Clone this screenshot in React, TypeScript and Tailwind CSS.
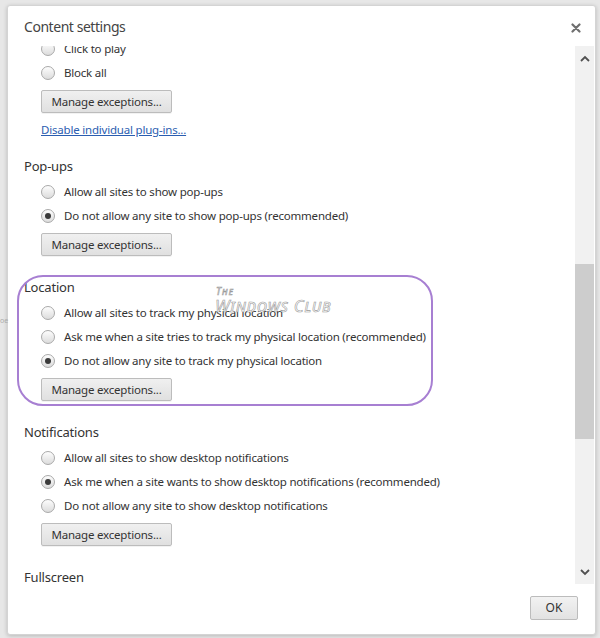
import React from "react";

const font = { fontFamily: '"Noto Sans", "Open Sans", Arial, sans-serif' };

function Radio({ checked, label }: { checked?: boolean; label: string }) {
  return (
    <div className="h-6 flex items-center pl-[33px]">
      <div className="w-[14px] h-[14px] rounded-full border border-[#a9a9a9] bg-gradient-to-b from-[#fdfdfd] to-[#dcdcdc] flex items-center justify-center shrink-0">
        {checked && <div className="w-[6px] h-[6px] rounded-full bg-[#3a3a3a]" />}
      </div>
      <span className="ml-[9px] text-[11.5px] tracking-[-0.2px] text-[#333] whitespace-nowrap">{label}</span>
    </div>
  );
}

function ManageBtn() {
  return (
    <div className="mt-[5px] pl-[33px]">
      <div className="w-[131px] h-[23px] border border-[#bcbcbc] rounded-[2px] bg-gradient-to-b from-[#f0f0f0] to-[#e0e0e0] flex items-center justify-center text-[11.5px] tracking-[-0.2px] text-[#333] shadow-[0_1px_0_rgba(0,0,0,0.05)]">
        Manage exceptions...
      </div>
    </div>
  );
}

function Heading({ children, mt }: { children: React.ReactNode; mt: string }) {
  return (
    <div className={`${mt} h-[18px] pl-[16px] text-[13px] tracking-[-0.2px] leading-[18px] text-[#333] mb-[5px]`}>
      {children}
    </div>
  );
}

export default function App() {
  return (
    <div className="relative w-[600px] h-[638px] bg-[#e7e7e7] pl-[7px] pt-[5px] overflow-hidden" style={font}>
      <div className="relative w-[589px] h-[630px] bg-white rounded-[3px] border border-[#d4d4d4] shadow-[0_1px_4px_rgba(0,0,0,0.2)] flex flex-col">
        {/* title */}
        <div className="h-[40px] flex items-center justify-between pl-[16px] pr-[14px] shrink-0">
          <span className="text-[14px] tracking-[-0.45px] text-[#444]">Content settings</span>
          <svg width="10" height="10" viewBox="0 0 10 10" className="mt-[4px]">
            <path d="M1.5 1.5 L8.5 8.5 M8.5 1.5 L1.5 8.5" stroke="#6f6f6f" strokeWidth="2.2" strokeLinecap="round" />
          </svg>
        </div>
        {/* content viewport */}
        <div className="relative h-[538px] flex shrink-0">
          <div className="relative flex-1 overflow-hidden">
            <div className="mt-[-9px] relative">
              <Radio label="Click to play" />
              <Radio label="Block all" />
              <ManageBtn />
              <div className="mt-[9px] h-4 pl-[33px] text-[11.5px] tracking-[-0.2px] leading-4 text-[#2a5db0] underline">
                Disable individual plug-ins...
              </div>
              <Heading mt="mt-[19px]">Pop-ups</Heading>
              <Radio label="Allow all sites to show pop-ups" />
              <Radio checked label="Do not allow any site to show pop-ups (recommended)" />
              <ManageBtn />
              <div className="relative">
                <Heading mt="mt-[22px]">Location</Heading>
                <Radio label="Allow all sites to track my physical location" />
                <Radio label="Ask me when a site tries to track my physical location (recommended)" />
                <Radio checked label="Do not allow any site to track my physical location" />
                <ManageBtn />
                {/* watermark */}
                <div className="absolute left-[207px] top-[8px] text-white [-webkit-text-stroke:0.6px_#9a9a9a] pointer-events-none leading-none italic [font-variant:small-caps]">
                  <div className="text-[10px] tracking-[1px] ml-[1px]">The</div>
                  <div className="text-[17px] tracking-[0.8px] mt-[1px] whitespace-nowrap">Windows Club</div>
                </div>
                {/* annotation */}
                <div className="absolute left-[9px] top-[-3px] w-[416px] h-[131px] rounded-[26px] border-2 border-[#a77fd2] pointer-events-none" />
              </div>
              <Heading mt="mt-[22px]">Notifications</Heading>
              <Radio label="Allow all sites to show desktop notifications" />
              <Radio checked label="Ask me when a site wants to show desktop notifications (recommended)" />
              <Radio label="Do not allow any site to show desktop notifications" />
              <ManageBtn />
              <Heading mt="mt-[22px]">Fullscreen</Heading>
            </div>
          </div>
          {/* scrollbar */}
          <div className="w-[19px] mr-[1px] bg-[#f1f1f1] flex flex-col items-center">
            <div className="h-[20px] flex items-center justify-center mt-[2px]">
              <svg width="10" height="7" viewBox="0 0 10 7">
                <path d="M1 6 L5 2 L9 6" stroke="#505050" strokeWidth="1.8" fill="none" />
              </svg>
            </div>
            <div className="mt-[196px] w-full h-[175px] bg-[#cdcdcd]" />
            <div className="flex-1" />
            <div className="h-[20px] flex items-center justify-center mb-[2px]">
              <svg width="10" height="7" viewBox="0 0 10 7">
                <path d="M1 1 L5 5 L9 1" stroke="#505050" strokeWidth="1.8" fill="none" />
              </svg>
            </div>
          </div>
        </div>
        {/* footer */}
        <div className="flex-1 flex justify-end items-start pr-[17px] pt-[12px]">
          <div className="w-[48px] h-[24px] border border-[#bcbcbc] rounded-[2px] bg-gradient-to-b from-[#f2f2f2] to-[#e2e2e2] flex items-center justify-center text-[12px] text-[#333]">
            OK
          </div>
        </div>
      </div>
      <div className="absolute left-0 top-[316px] text-[7px] text-[#aaa]">oe</div>
    </div>
  );
}
